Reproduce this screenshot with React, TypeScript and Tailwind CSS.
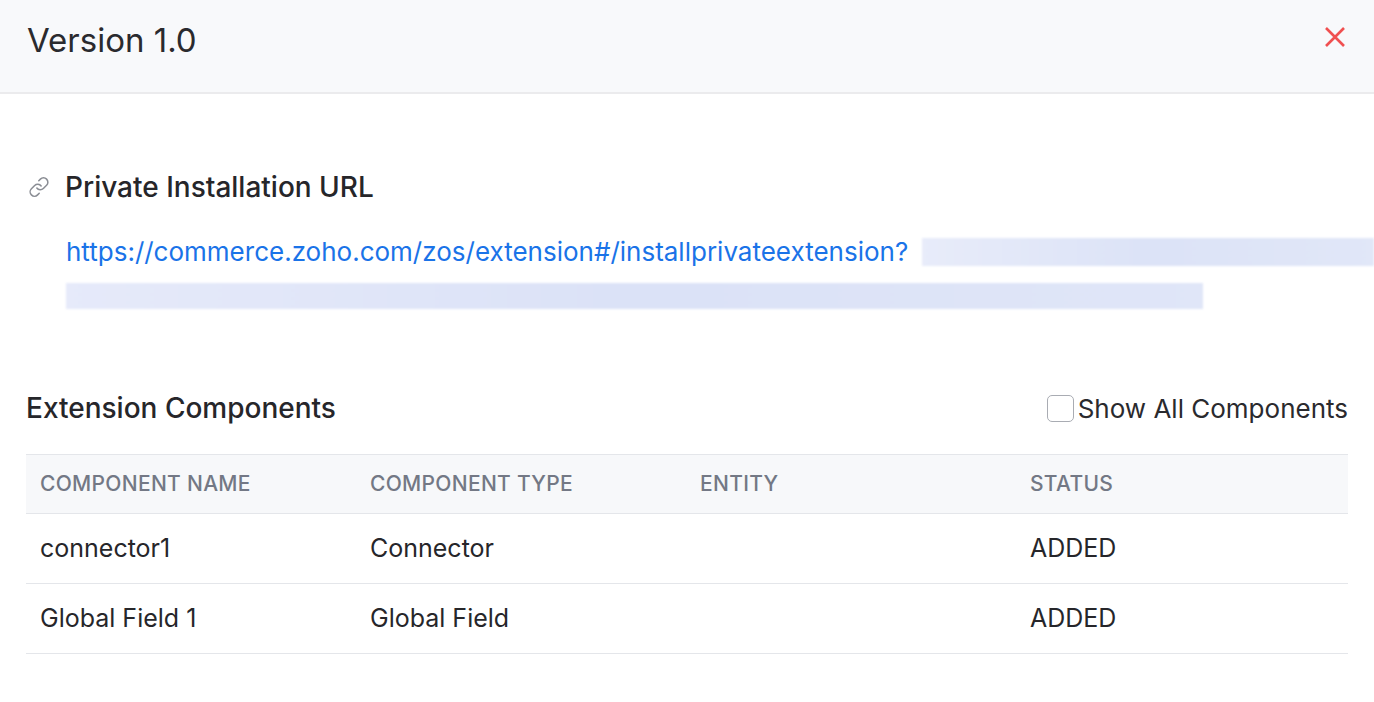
export default function App() {
  const rows = [
    ["connector1", "Connector", "", "ADDED"],
    ["Global Field 1", "Global Field", "", "ADDED"],
  ];
  return (
    <div className="w-[1374px] h-[702px] bg-white text-[#212529] overflow-hidden" style={{ fontFamily: "Inter, 'Noto Sans', sans-serif" }}>
      <div className="h-[94px] bg-[#f8f9fb] border-b-2 border-[#ebebed] flex items-center justify-between pl-[27px] pr-[28px]">
        <div className="text-[33px] text-[#2a2a2e] -mt-[10px]">Version 1.0</div>
        <svg width="22" height="22" viewBox="0 0 22 22" className="-mt-[18px]">
          <path d="M2 2L20 20M20 2L2 20" stroke="#f05050" strokeWidth="2.6" />
        </svg>
      </div>
      <div className="px-[26px]">
        <div className="flex items-center gap-[13px] mt-[72px]">
          <svg width="26" height="26" viewBox="0 0 24 24" fill="none" stroke="#8a8d94" strokeWidth="1.4" strokeLinecap="round">
            <path d="M10 13a4 4 0 0 0 6 .4l3-3a4 4 0 0 0-5.7-5.7l-1.5 1.5" />
            <path d="M14 11a4 4 0 0 0-6-.4l-3 3a4 4 0 0 0 5.7 5.7l1.5-1.5" />
          </svg>
          <div className="text-[28px] font-medium text-[#26262a]">Private Installation URL</div>
        </div>
        <div className="pl-[40px] mt-[24px] relative">
          <div className="flex items-center">
            <span className="text-[26px] text-[#1a73e8] whitespace-nowrap">https://commerce.zoho.com/zos/extension#/installprivateextension?</span>
            <div className="ml-[14px] flex-1 h-[28px] -mr-[26px] bg-gradient-to-r from-[#e8ecfa] via-[#dce3f7] to-[#e1e7f8] blur-[1px]" />
          </div>
          <div className="mt-[12px] w-[1137px] h-[26px] bg-gradient-to-r from-[#e6eafa] via-[#dbe2f7] to-[#e0e6f8] blur-[1px]" />
        </div>
        <div className="flex items-center justify-between mt-[78px]">
          <div className="text-[28px] font-medium text-[#26262a]">Extension Components</div>
          <label className="flex items-center gap-[4px] text-[26px] text-[#2a2a2e]">
            <span className="w-[27px] h-[27px] border-[1.5px] border-[#a9acb3] rounded-[5px] bg-white" />
            Show All Components
          </label>
        </div>
        <div className="mt-[25px] border-t border-[#e4e6ea]">
          <div className="grid grid-cols-[330px_330px_330px_1fr] h-[59px] items-center bg-[#f7f8fa] border-b border-[#e4e6ea] text-[21px] font-medium text-[#737885] tracking-[0.3px]">
            <div className="pl-[14px]">COMPONENT NAME</div>
            <div className="pl-[14px]">COMPONENT TYPE</div>
            <div className="pl-[14px]">ENTITY</div>
            <div className="pl-[14px]">STATUS</div>
          </div>
          {rows.map((r, i) => (
            <div key={i} className="grid grid-cols-[330px_330px_330px_1fr] h-[70px] items-center border-b border-[#e4e6ea] text-[25px] text-[#26262a]">
              {r.map((c, j) => (
                <div key={j} className="pl-[14px]">{c}</div>
              ))}
            </div>
          ))}
        </div>
      </div>
    </div>
  );
}
